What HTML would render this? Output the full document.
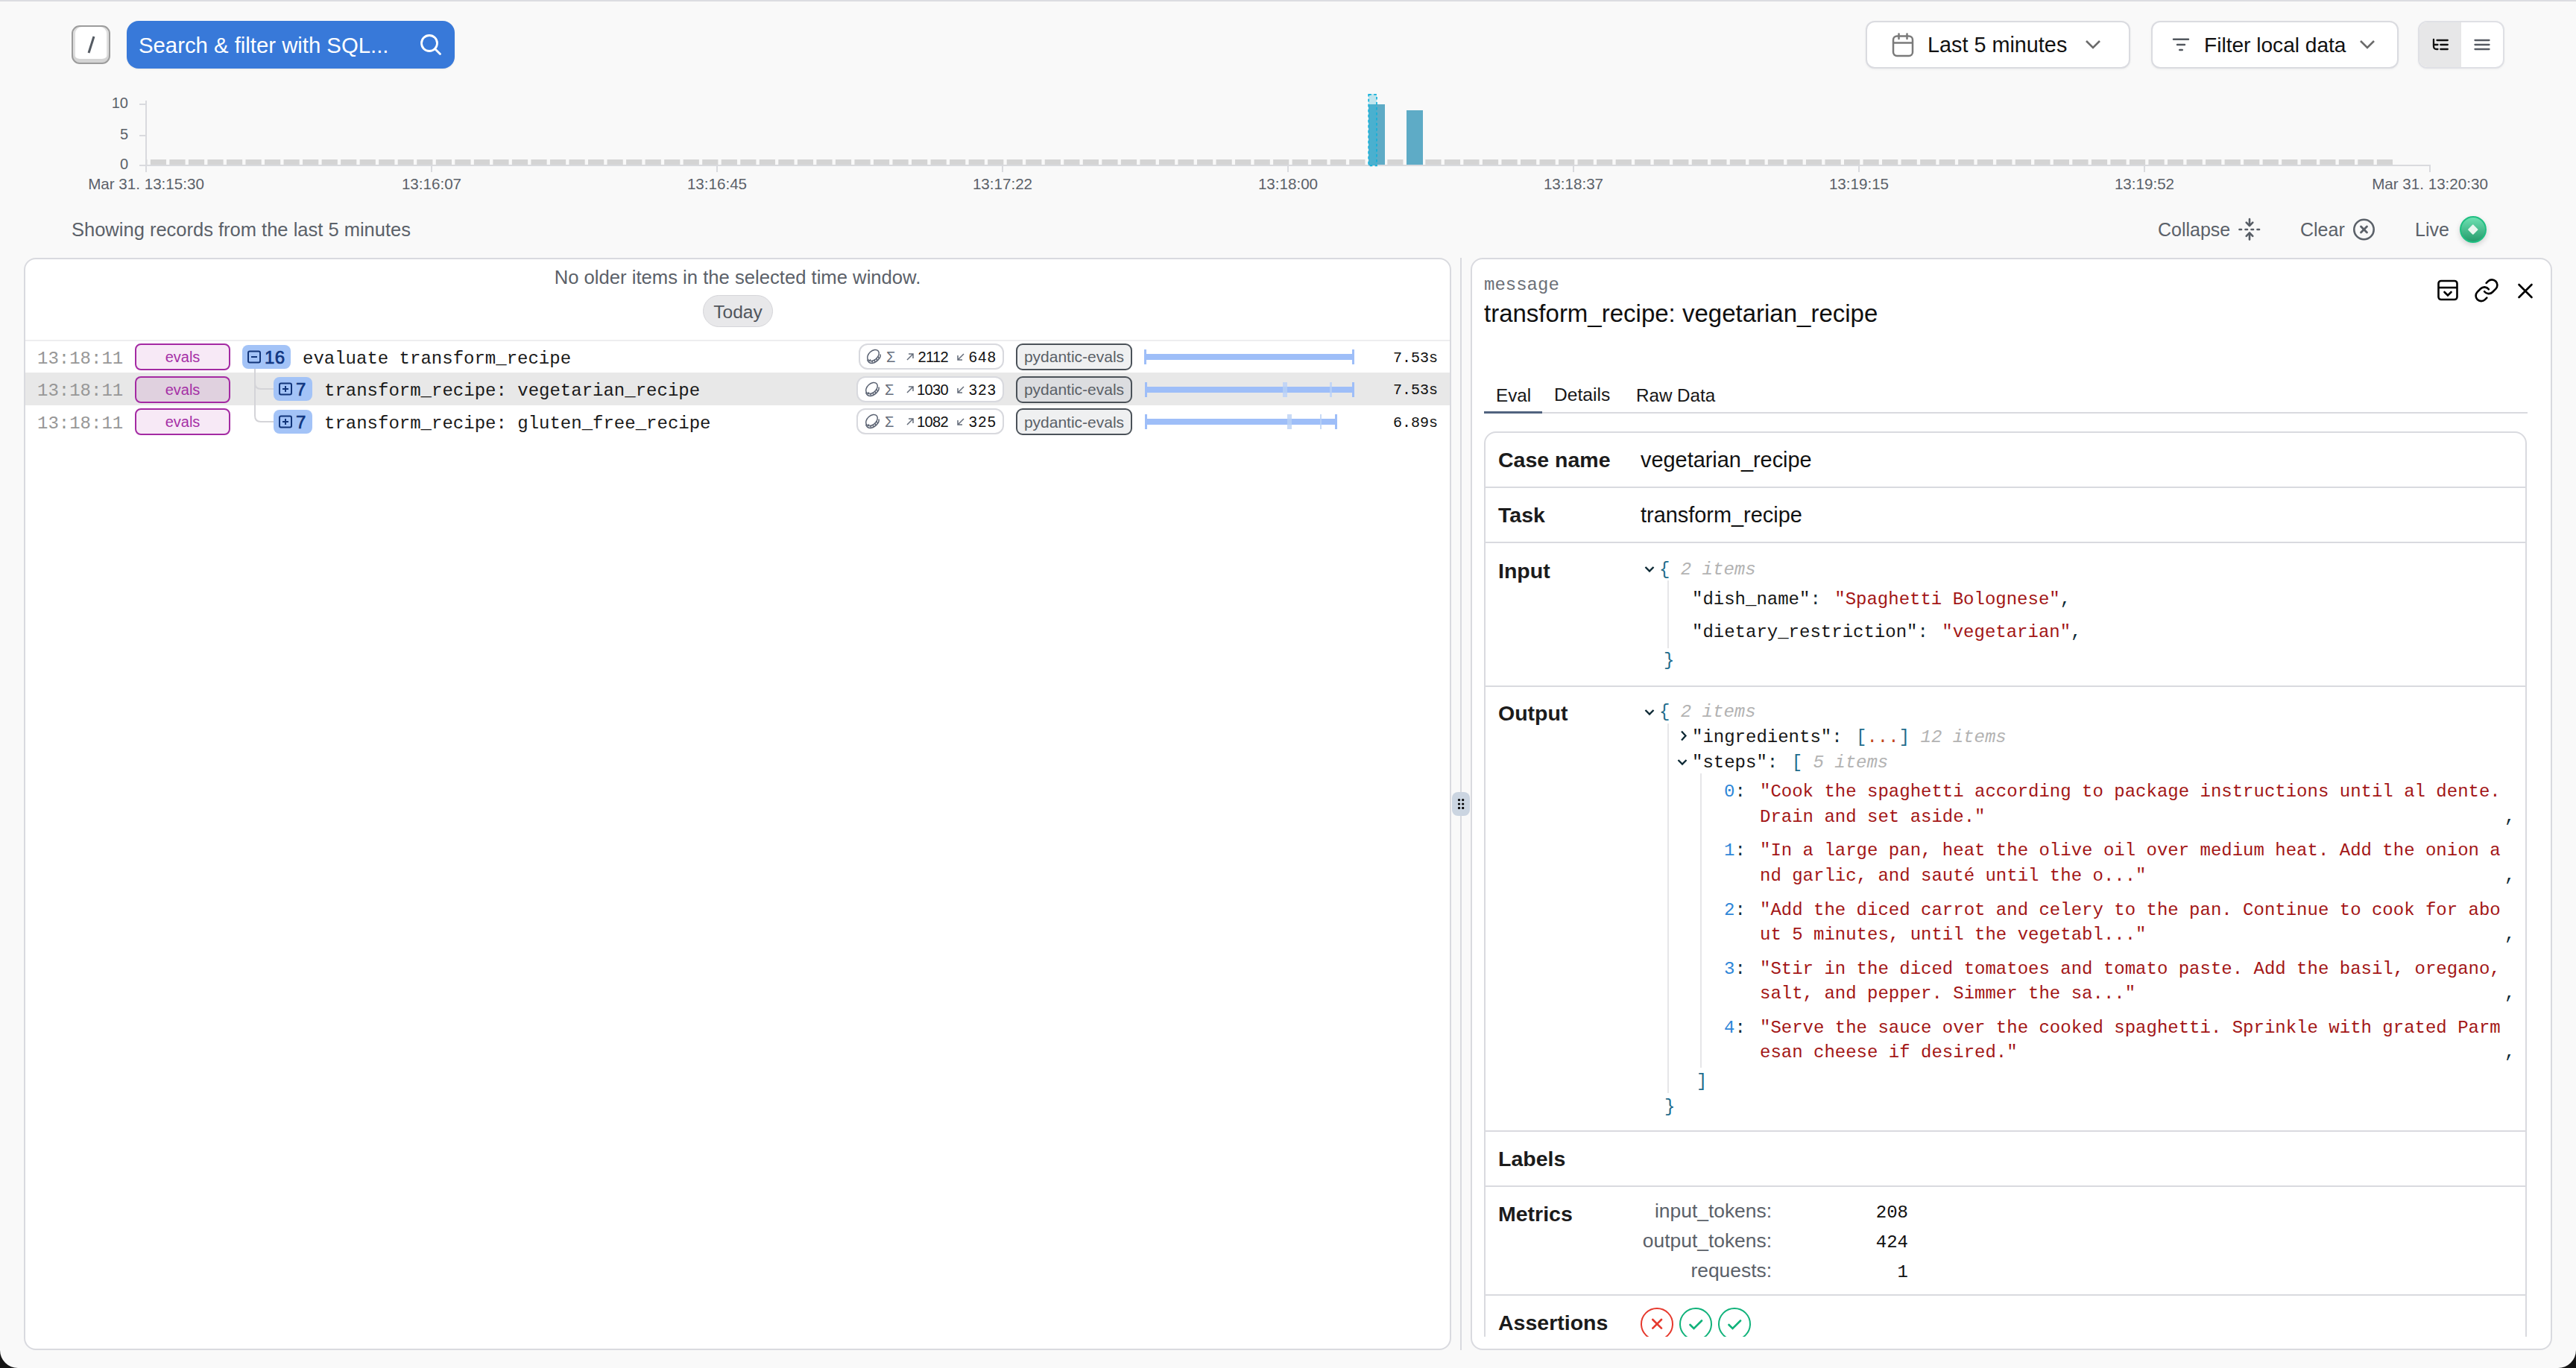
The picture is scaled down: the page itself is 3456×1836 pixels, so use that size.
<!DOCTYPE html><html><head><meta charset="utf-8"><style>
html,body{margin:0;padding:0;}
body{width:3456px;height:1836px;position:relative;overflow:hidden;background:#f9f9f9;}
.t{position:absolute;white-space:pre;}
.b{position:absolute;box-sizing:border-box;}
</style></head><body>
<div class="b" style="left:0px;top:0px;width:3456px;height:2px;background:#dcdde1;"></div>
<div class="b" style="left:96px;top:34px;width:52px;height:52px;background:#ffffff;border:2px solid #9c9c9c;border-radius:11px;box-shadow: inset 0 -5px 0 #d4d4d4, inset 3px 0 0 #dedede, inset -3px 0 0 #dedede;"></div>
<svg class="b" style="left:110px;top:44px;" width="24" height="32" viewBox="0 0 24 32" fill="none"><line x1="16" y1="5" x2="9" y2="27" stroke="#555b63" stroke-width="3"/></svg>
<div class="b" style="left:170px;top:28px;width:440px;height:64px;background:#3879d9;border-radius:16px;box-shadow:0 1px 2px rgba(0,0,0,0.08);"></div>
<div class="t" style="top:45.50px;font-family:'Liberation Sans', sans-serif;font-size:29.3px;line-height:29.3px;color:#ffffff;font-weight:400;left:186.00px;">Search &amp; filter with SQL...</div>
<svg class="b" style="left:562px;top:44px;" width="32" height="32" viewBox="0 0 32 32" fill="none"><circle cx="14" cy="14" r="10.5" stroke="#fff" stroke-width="2.8"/><line x1="21.5" y1="21.5" x2="28.5" y2="28.5" stroke="#fff" stroke-width="2.8" stroke-linecap="round"/></svg>
<div class="b" style="left:2503px;top:28px;width:355px;height:64px;background:#fff;border:2px solid #dadbe0;border-radius:12px;box-shadow:0 1px 3px rgba(0,0,0,0.06);"></div>
<svg class="b" style="left:2536px;top:42px;" width="34" height="36" viewBox="0 0 34 36" fill="none"><rect x="4" y="6.5" width="26" height="26.5" rx="5" stroke="#7a7a7a" stroke-width="2.5"/><line x1="4" y1="15.5" x2="30" y2="15.5" stroke="#7a7a7a" stroke-width="2.5"/><line x1="11.5" y1="3.5" x2="11.5" y2="10" stroke="#7a7a7a" stroke-width="2.5" stroke-linecap="round"/><line x1="22.5" y1="3.5" x2="22.5" y2="10" stroke="#7a7a7a" stroke-width="2.5" stroke-linecap="round"/></svg>
<div class="t" style="top:46.32px;font-family:'Liberation Sans', sans-serif;font-size:28.8px;line-height:28.8px;color:#111111;font-weight:400;left:2586.00px;">Last 5 minutes</div>
<svg class="b" style="left:2796px;top:50px;" width="24" height="20" viewBox="0 0 24 20" fill="none"><polyline points="3,5 12,14 21,5" stroke="#6b6b6b" stroke-width="2.6" fill="none"/></svg>
<div class="b" style="left:2886px;top:28px;width:332px;height:64px;background:#fff;border:2px solid #dadbe0;border-radius:12px;box-shadow:0 1px 3px rgba(0,0,0,0.06);"></div>
<svg class="b" style="left:2910px;top:48px;" width="32" height="24" viewBox="0 0 32 24" fill="none"><line x1="6" y1="4.8" x2="26" y2="4.8" stroke="#53585f" stroke-width="2.4" stroke-linecap="round"/><line x1="11" y1="12" x2="21" y2="12" stroke="#53585f" stroke-width="2.4" stroke-linecap="round"/><line x1="14.2" y1="19" x2="17.8" y2="19" stroke="#53585f" stroke-width="2.4" stroke-linecap="round"/></svg>
<div class="t" style="top:46.91px;font-family:'Liberation Sans', sans-serif;font-size:28.1px;line-height:28.1px;color:#111111;font-weight:400;left:2957.00px;">Filter local data</div>
<svg class="b" style="left:3164px;top:50px;" width="24" height="20" viewBox="0 0 24 20" fill="none"><polyline points="3,5 12,14 21,5" stroke="#6b6b6b" stroke-width="2.6" fill="none"/></svg>
<div class="b" style="left:3244px;top:28px;width:116px;height:64px;background:#fff;border:2px solid #dfe0e5;border-radius:12px;box-shadow:0 1px 3px rgba(0,0,0,0.05);overflow:hidden;"></div>
<div class="b" style="left:3246px;top:30px;width:56px;height:60px;background:#e7e7e8;border-radius:10px 0 0 10px;"></div>
<svg class="b" style="left:3240px;top:25px;" width="125" height="70" viewBox="0 0 125 70" fill="none"><g stroke-width="2.3" stroke-linecap="round" fill="none"><g stroke="#111"><path d="M25 28 V37 Q25 41 29 41 H30.5"/><line x1="25" y1="35" x2="30.5" y2="35"/><line x1="29.5" y1="29" x2="43.8" y2="29"/><line x1="34.3" y1="35" x2="43.8" y2="35"/><line x1="34.3" y1="41" x2="43.8" y2="41"/></g><g stroke="#555a62"><line x1="80.5" y1="29" x2="99.5" y2="29"/><line x1="80.5" y1="35" x2="99.5" y2="35"/><line x1="80.5" y1="41" x2="99.5" y2="41"/></g></g></svg>
<div class="t" style="top:128.07px;font-family:'Liberation Sans', sans-serif;font-size:20px;line-height:20px;color:#5b6169;font-weight:400;right:3284.00px;text-align:right;">10</div>
<div class="t" style="top:170.07px;font-family:'Liberation Sans', sans-serif;font-size:20px;line-height:20px;color:#5b6169;font-weight:400;right:3284.00px;text-align:right;">5</div>
<div class="t" style="top:210.07px;font-family:'Liberation Sans', sans-serif;font-size:20px;line-height:20px;color:#5b6169;font-weight:400;right:3284.00px;text-align:right;">0</div>
<div class="b" style="left:195px;top:135px;width:2px;height:96px;background:#d9dade;"></div>
<div class="b" style="left:187px;top:139px;width:9px;height:2px;background:#d9dade;"></div>
<div class="b" style="left:187px;top:181px;width:9px;height:2px;background:#d9dade;"></div>
<div class="b" style="left:187px;top:221px;width:3074px;height:2px;background:#d9dade;"></div>
<div class="b" style="left:195px;top:222px;width:2px;height:9px;background:#d9dade;"></div>
<div class="t" style="top:236.56px;font-family:'Liberation Sans', sans-serif;font-size:20.6px;line-height:20.6px;color:#5b6169;font-weight:400;left:-4.00px;width:400px;text-align:center;">Mar 31. 13:15:30</div>
<div class="b" style="left:578px;top:222px;width:2px;height:9px;background:#d9dade;"></div>
<div class="t" style="top:236.56px;font-family:'Liberation Sans', sans-serif;font-size:20.6px;line-height:20.6px;color:#5b6169;font-weight:400;left:379.00px;width:400px;text-align:center;">13:16:07</div>
<div class="b" style="left:961px;top:222px;width:2px;height:9px;background:#d9dade;"></div>
<div class="t" style="top:236.56px;font-family:'Liberation Sans', sans-serif;font-size:20.6px;line-height:20.6px;color:#5b6169;font-weight:400;left:762.00px;width:400px;text-align:center;">13:16:45</div>
<div class="b" style="left:1344px;top:222px;width:2px;height:9px;background:#d9dade;"></div>
<div class="t" style="top:236.56px;font-family:'Liberation Sans', sans-serif;font-size:20.6px;line-height:20.6px;color:#5b6169;font-weight:400;left:1145.00px;width:400px;text-align:center;">13:17:22</div>
<div class="b" style="left:1727px;top:222px;width:2px;height:9px;background:#d9dade;"></div>
<div class="t" style="top:236.56px;font-family:'Liberation Sans', sans-serif;font-size:20.6px;line-height:20.6px;color:#5b6169;font-weight:400;left:1528.00px;width:400px;text-align:center;">13:18:00</div>
<div class="b" style="left:2110px;top:222px;width:2px;height:9px;background:#d9dade;"></div>
<div class="t" style="top:236.56px;font-family:'Liberation Sans', sans-serif;font-size:20.6px;line-height:20.6px;color:#5b6169;font-weight:400;left:1911.00px;width:400px;text-align:center;">13:18:37</div>
<div class="b" style="left:2493px;top:222px;width:2px;height:9px;background:#d9dade;"></div>
<div class="t" style="top:236.56px;font-family:'Liberation Sans', sans-serif;font-size:20.6px;line-height:20.6px;color:#5b6169;font-weight:400;left:2294.00px;width:400px;text-align:center;">13:19:15</div>
<div class="b" style="left:2876px;top:222px;width:2px;height:9px;background:#d9dade;"></div>
<div class="t" style="top:236.56px;font-family:'Liberation Sans', sans-serif;font-size:20.6px;line-height:20.6px;color:#5b6169;font-weight:400;left:2677.00px;width:400px;text-align:center;">13:19:52</div>
<div class="b" style="left:3259px;top:222px;width:2px;height:9px;background:#d9dade;"></div>
<div class="t" style="top:236.56px;font-family:'Liberation Sans', sans-serif;font-size:20.6px;line-height:20.6px;color:#5b6169;font-weight:400;left:3060.00px;width:400px;text-align:center;">Mar 31. 13:20:30</div>
<svg class="b" style="left:0px;top:100px;" width="3456" height="140" viewBox="0 0 3456 140" fill="none"><rect x="197.00" y="114.0" width="0.50" height="7" fill="#d4d4d4"/><rect x="201.83" y="114.0" width="21.20" height="7" fill="#d4d4d4"/><rect x="227.36" y="114.0" width="21.20" height="7" fill="#d4d4d4"/><rect x="252.89" y="114.0" width="21.20" height="7" fill="#d4d4d4"/><rect x="278.42" y="114.0" width="21.20" height="7" fill="#d4d4d4"/><rect x="303.95" y="114.0" width="21.20" height="7" fill="#d4d4d4"/><rect x="329.48" y="114.0" width="21.20" height="7" fill="#d4d4d4"/><rect x="355.01" y="114.0" width="21.20" height="7" fill="#d4d4d4"/><rect x="380.54" y="114.0" width="21.20" height="7" fill="#d4d4d4"/><rect x="406.07" y="114.0" width="21.20" height="7" fill="#d4d4d4"/><rect x="431.60" y="114.0" width="21.20" height="7" fill="#d4d4d4"/><rect x="457.13" y="114.0" width="21.20" height="7" fill="#d4d4d4"/><rect x="482.66" y="114.0" width="21.20" height="7" fill="#d4d4d4"/><rect x="508.19" y="114.0" width="21.20" height="7" fill="#d4d4d4"/><rect x="533.72" y="114.0" width="21.20" height="7" fill="#d4d4d4"/><rect x="559.25" y="114.0" width="21.20" height="7" fill="#d4d4d4"/><rect x="584.78" y="114.0" width="21.20" height="7" fill="#d4d4d4"/><rect x="610.31" y="114.0" width="21.20" height="7" fill="#d4d4d4"/><rect x="635.84" y="114.0" width="21.20" height="7" fill="#d4d4d4"/><rect x="661.37" y="114.0" width="21.20" height="7" fill="#d4d4d4"/><rect x="686.90" y="114.0" width="21.20" height="7" fill="#d4d4d4"/><rect x="712.43" y="114.0" width="21.20" height="7" fill="#d4d4d4"/><rect x="737.96" y="114.0" width="21.20" height="7" fill="#d4d4d4"/><rect x="763.49" y="114.0" width="21.20" height="7" fill="#d4d4d4"/><rect x="789.02" y="114.0" width="21.20" height="7" fill="#d4d4d4"/><rect x="814.55" y="114.0" width="21.20" height="7" fill="#d4d4d4"/><rect x="840.08" y="114.0" width="21.20" height="7" fill="#d4d4d4"/><rect x="865.61" y="114.0" width="21.20" height="7" fill="#d4d4d4"/><rect x="891.14" y="114.0" width="21.20" height="7" fill="#d4d4d4"/><rect x="916.67" y="114.0" width="21.20" height="7" fill="#d4d4d4"/><rect x="942.20" y="114.0" width="21.20" height="7" fill="#d4d4d4"/><rect x="967.73" y="114.0" width="21.20" height="7" fill="#d4d4d4"/><rect x="993.26" y="114.0" width="21.20" height="7" fill="#d4d4d4"/><rect x="1018.79" y="114.0" width="21.20" height="7" fill="#d4d4d4"/><rect x="1044.32" y="114.0" width="21.20" height="7" fill="#d4d4d4"/><rect x="1069.85" y="114.0" width="21.20" height="7" fill="#d4d4d4"/><rect x="1095.38" y="114.0" width="21.20" height="7" fill="#d4d4d4"/><rect x="1120.91" y="114.0" width="21.20" height="7" fill="#d4d4d4"/><rect x="1146.44" y="114.0" width="21.20" height="7" fill="#d4d4d4"/><rect x="1171.97" y="114.0" width="21.20" height="7" fill="#d4d4d4"/><rect x="1197.50" y="114.0" width="21.20" height="7" fill="#d4d4d4"/><rect x="1223.03" y="114.0" width="21.20" height="7" fill="#d4d4d4"/><rect x="1248.56" y="114.0" width="21.20" height="7" fill="#d4d4d4"/><rect x="1274.09" y="114.0" width="21.20" height="7" fill="#d4d4d4"/><rect x="1299.62" y="114.0" width="21.20" height="7" fill="#d4d4d4"/><rect x="1325.15" y="114.0" width="21.20" height="7" fill="#d4d4d4"/><rect x="1350.68" y="114.0" width="21.20" height="7" fill="#d4d4d4"/><rect x="1376.21" y="114.0" width="21.20" height="7" fill="#d4d4d4"/><rect x="1401.74" y="114.0" width="21.20" height="7" fill="#d4d4d4"/><rect x="1427.27" y="114.0" width="21.20" height="7" fill="#d4d4d4"/><rect x="1452.80" y="114.0" width="21.20" height="7" fill="#d4d4d4"/><rect x="1478.33" y="114.0" width="21.20" height="7" fill="#d4d4d4"/><rect x="1503.86" y="114.0" width="21.20" height="7" fill="#d4d4d4"/><rect x="1529.39" y="114.0" width="21.20" height="7" fill="#d4d4d4"/><rect x="1554.92" y="114.0" width="21.20" height="7" fill="#d4d4d4"/><rect x="1580.45" y="114.0" width="21.20" height="7" fill="#d4d4d4"/><rect x="1605.98" y="114.0" width="21.20" height="7" fill="#d4d4d4"/><rect x="1631.51" y="114.0" width="21.20" height="7" fill="#d4d4d4"/><rect x="1657.04" y="114.0" width="21.20" height="7" fill="#d4d4d4"/><rect x="1682.57" y="114.0" width="21.20" height="7" fill="#d4d4d4"/><rect x="1708.10" y="114.0" width="21.20" height="7" fill="#d4d4d4"/><rect x="1733.63" y="114.0" width="21.20" height="7" fill="#d4d4d4"/><rect x="1759.16" y="114.0" width="21.20" height="7" fill="#d4d4d4"/><rect x="1784.69" y="114.0" width="21.20" height="7" fill="#d4d4d4"/><rect x="1810.22" y="114.0" width="21.20" height="7" fill="#d4d4d4"/><rect x="1861.28" y="114.0" width="21.20" height="7" fill="#d4d4d4"/><rect x="1912.34" y="114.0" width="21.20" height="7" fill="#d4d4d4"/><rect x="1937.87" y="114.0" width="21.20" height="7" fill="#d4d4d4"/><rect x="1963.40" y="114.0" width="21.20" height="7" fill="#d4d4d4"/><rect x="1988.93" y="114.0" width="21.20" height="7" fill="#d4d4d4"/><rect x="2014.46" y="114.0" width="21.20" height="7" fill="#d4d4d4"/><rect x="2039.99" y="114.0" width="21.20" height="7" fill="#d4d4d4"/><rect x="2065.52" y="114.0" width="21.20" height="7" fill="#d4d4d4"/><rect x="2091.05" y="114.0" width="21.20" height="7" fill="#d4d4d4"/><rect x="2116.58" y="114.0" width="21.20" height="7" fill="#d4d4d4"/><rect x="2142.11" y="114.0" width="21.20" height="7" fill="#d4d4d4"/><rect x="2167.64" y="114.0" width="21.20" height="7" fill="#d4d4d4"/><rect x="2193.17" y="114.0" width="21.20" height="7" fill="#d4d4d4"/><rect x="2218.70" y="114.0" width="21.20" height="7" fill="#d4d4d4"/><rect x="2244.23" y="114.0" width="21.20" height="7" fill="#d4d4d4"/><rect x="2269.76" y="114.0" width="21.20" height="7" fill="#d4d4d4"/><rect x="2295.29" y="114.0" width="21.20" height="7" fill="#d4d4d4"/><rect x="2320.82" y="114.0" width="21.20" height="7" fill="#d4d4d4"/><rect x="2346.35" y="114.0" width="21.20" height="7" fill="#d4d4d4"/><rect x="2371.88" y="114.0" width="21.20" height="7" fill="#d4d4d4"/><rect x="2397.41" y="114.0" width="21.20" height="7" fill="#d4d4d4"/><rect x="2422.94" y="114.0" width="21.20" height="7" fill="#d4d4d4"/><rect x="2448.47" y="114.0" width="21.20" height="7" fill="#d4d4d4"/><rect x="2474.00" y="114.0" width="21.20" height="7" fill="#d4d4d4"/><rect x="2499.53" y="114.0" width="21.20" height="7" fill="#d4d4d4"/><rect x="2525.06" y="114.0" width="21.20" height="7" fill="#d4d4d4"/><rect x="2550.59" y="114.0" width="21.20" height="7" fill="#d4d4d4"/><rect x="2576.12" y="114.0" width="21.20" height="7" fill="#d4d4d4"/><rect x="2601.65" y="114.0" width="21.20" height="7" fill="#d4d4d4"/><rect x="2627.18" y="114.0" width="21.20" height="7" fill="#d4d4d4"/><rect x="2652.71" y="114.0" width="21.20" height="7" fill="#d4d4d4"/><rect x="2678.24" y="114.0" width="21.20" height="7" fill="#d4d4d4"/><rect x="2703.77" y="114.0" width="21.20" height="7" fill="#d4d4d4"/><rect x="2729.30" y="114.0" width="21.20" height="7" fill="#d4d4d4"/><rect x="2754.83" y="114.0" width="21.20" height="7" fill="#d4d4d4"/><rect x="2780.36" y="114.0" width="21.20" height="7" fill="#d4d4d4"/><rect x="2805.89" y="114.0" width="21.20" height="7" fill="#d4d4d4"/><rect x="2831.42" y="114.0" width="21.20" height="7" fill="#d4d4d4"/><rect x="2856.95" y="114.0" width="21.20" height="7" fill="#d4d4d4"/><rect x="2882.48" y="114.0" width="21.20" height="7" fill="#d4d4d4"/><rect x="2908.01" y="114.0" width="21.20" height="7" fill="#d4d4d4"/><rect x="2933.54" y="114.0" width="21.20" height="7" fill="#d4d4d4"/><rect x="2959.07" y="114.0" width="21.20" height="7" fill="#d4d4d4"/><rect x="2984.60" y="114.0" width="21.20" height="7" fill="#d4d4d4"/><rect x="3010.13" y="114.0" width="21.20" height="7" fill="#d4d4d4"/><rect x="3035.66" y="114.0" width="21.20" height="7" fill="#d4d4d4"/><rect x="3061.19" y="114.0" width="21.20" height="7" fill="#d4d4d4"/><rect x="3086.72" y="114.0" width="21.20" height="7" fill="#d4d4d4"/><rect x="3112.25" y="114.0" width="21.20" height="7" fill="#d4d4d4"/><rect x="3137.78" y="114.0" width="21.20" height="7" fill="#d4d4d4"/><rect x="3163.31" y="114.0" width="21.20" height="7" fill="#d4d4d4"/><rect x="3188.84" y="114.0" width="21.20" height="7" fill="#d4d4d4"/></svg>
<div class="b" style="left:1836px;top:140px;width:22px;height:81px;background:#5eabc6;"></div>
<div class="b" style="left:1887px;top:148px;width:22px;height:73px;background:#5eabc6;"></div>
<div class="b" style="left:1836px;top:140px;width:11px;height:82px;background:#4ab0cf;"></div>
<div class="b" style="left:1836px;top:126px;width:11px;height:14px;background:#c0e5ee;"></div>
<svg class="b" style="left:1830px;top:120px;" width="24" height="110" viewBox="0 0 24 110" fill="none"><rect x="6.2" y="6.8" width="10.8" height="95.5" stroke="#12b0d9" stroke-width="1.7" stroke-dasharray="3.6 3.4" fill="none"/></svg>
<div class="t" style="top:296.41px;font-family:'Liberation Sans', sans-serif;font-size:25.5px;line-height:25.5px;color:#5b6169;font-weight:400;left:96.00px;">Showing records from the last 5 minutes</div>
<div class="t" style="top:296.34px;font-family:'Liberation Sans', sans-serif;font-size:25px;line-height:25px;color:#5b6169;font-weight:400;left:2895.00px;">Collapse</div>
<svg class="b" style="left:3000px;top:290px;" width="36" height="36" viewBox="0 0 36 36" fill="none"><g stroke="#575d65" stroke-width="2.6" stroke-linecap="round" stroke-linejoin="round" fill="none"><line x1="18" y1="4" x2="18" y2="12.5"/><polyline points="13.7,8.7 18,13 22.3,8.7"/><line x1="18" y1="31.5" x2="18" y2="23"/><polyline points="13.7,26.8 18,22.5 22.3,26.8"/><line x1="4.5" y1="18" x2="7" y2="18"/><line x1="12.5" y1="18" x2="15" y2="18"/><line x1="20.5" y1="18" x2="23" y2="18"/><line x1="28.5" y1="18" x2="31" y2="18"/></g></svg>
<div class="t" style="top:296.34px;font-family:'Liberation Sans', sans-serif;font-size:25px;line-height:25px;color:#5b6169;font-weight:400;left:3086.00px;">Clear</div>
<svg class="b" style="left:3154px;top:290px;" width="36" height="36" viewBox="0 0 36 36" fill="none"><circle cx="17.5" cy="18" r="13.2" stroke="#5b6169" stroke-width="2.6"/><line x1="13.5" y1="14" x2="21.5" y2="22" stroke="#5b6169" stroke-width="2.8" stroke-linecap="round"/><line x1="21.5" y1="14" x2="13.5" y2="22" stroke="#5b6169" stroke-width="2.8" stroke-linecap="round"/></svg>
<div class="t" style="top:296.34px;font-family:'Liberation Sans', sans-serif;font-size:25px;line-height:25px;color:#5b6169;font-weight:400;left:3240.00px;">Live</div>
<div class="b" style="left:3300px;top:290px;width:36px;height:36px;background:linear-gradient(180deg,#6ee0b2 0%,#259c6c 100%);border:2px solid #20bf82;border-radius:18px;box-shadow:0 3px 7px rgba(0,0,0,0.16);"></div>
<div class="b" style="left:3313.4px;top:303.2px;width:9.599999999999909px;height:9.600000000000023px;background:#eaf6ef;border-radius:1px;transform:rotate(45deg);"></div>
<div class="b" style="left:32px;top:346px;width:1915px;height:1466px;background:#ffffff;border:2px solid #d9dadf;border-radius:16px;"></div>
<div class="t" style="top:360.29px;font-family:'Liberation Sans', sans-serif;font-size:25.65px;line-height:25.65px;color:#5b6169;font-weight:400;left:589.50px;width:800px;text-align:center;">No older items in the selected time window.</div>
<div class="b" style="left:943px;top:396px;width:94px;height:43px;background:#e8e8ea;border:1.5px solid #d5d5d9;border-radius:22px;"></div>
<div class="t" style="top:406.76px;font-family:'Liberation Sans', sans-serif;font-size:24.5px;line-height:24.5px;color:#50555c;font-weight:400;left:890.00px;width:200px;text-align:center;">Today</div>
<div class="b" style="left:34px;top:456px;width:1911px;height:2px;background:#ededef;"></div>
<div class="b" style="left:34px;top:500px;width:1911px;height:44px;background:#e8e8e8;"></div>
<svg class="b" style="left:330px;top:490px;" width="50" height="90" viewBox="0 0 50 90" fill="none"><path d="M12 5 V24 Q12 32 20 32 H37" stroke="#d4d4d8" stroke-width="2" fill="none"/><path d="M12 20 V68 Q12 76 20 76 H37" stroke="#d4d4d8" stroke-width="2" fill="none"/></svg>
<div class="t" style="top:469.61px;font-family:'Liberation Mono', monospace;font-size:24px;line-height:24px;color:#979797;font-weight:400;left:50.00px;">13:18:11</div>
<div class="b" style="left:181px;top:461.0px;width:128px;height:36.0px;background:#f7e9f6;border:2.5px solid #a42aa3;border-radius:8px;"></div>
<div class="t" style="top:469.07px;font-family:'Liberation Sans', sans-serif;font-size:20px;line-height:20px;color:#a52fa6;font-weight:400;left:185.00px;width:120px;text-align:center;">evals</div>
<div class="b" style="left:325px;top:463px;width:65px;height:32px;background:#a3c3f7;border-radius:8px;"></div>
<svg class="b" style="left:330px;top:469px;" width="22" height="20" viewBox="0 0 22 20" fill="none"><rect x="3" y="2.5" width="16" height="15" rx="2" stroke="#12357a" stroke-width="2"/><line x1="7" y1="10" x2="15" y2="10" stroke="#12357a" stroke-width="2"/></svg>
<div class="t" style="top:467.98px;font-family:'Liberation Sans', sans-serif;font-size:24px;line-height:24px;color:#0f3580;font-weight:400;letter-spacing:0.3px;left:355.00px;-webkit-text-stroke:0.7px #0f3580;">16</div>
<div class="t" style="top:469.61px;font-family:'Liberation Mono', monospace;font-size:24px;line-height:24px;color:#1a1a1a;font-weight:400;left:406.00px;">evaluate transform_recipe</div>
<div class="b" style="left:1152px;top:461.0px;width:195px;height:35.0px;background:#ffffff;border:2px solid #d8d9de;border-radius:12px;"></div>
<svg class="b" style="left:1161px;top:468.0px;" width="22" height="22" viewBox="0 0 22 22" fill="none"><g stroke="#5a6272" stroke-width="1.5" fill="none"><ellipse cx="10.5" cy="9" rx="9" ry="6" transform="rotate(-42 10.5 9)"/><path d="M2.6 14.5 Q4 19.5 9 19.5 Q15 18.5 19.5 12 Q20.5 9.5 20 7.5"/><path d="M5.5 17 L6.8 14.2 M9 18.7 L9.6 15.8 M12.5 17.6 L12.3 14.6 M15.5 15.5 L14.9 12.6 M18 12.8 L17 10.2"/></g></svg>
<div class="t" style="top:469.07px;font-family:'Liberation Sans', sans-serif;font-size:20px;line-height:20px;color:#646c7a;font-weight:400;left:1189.00px;">Σ</div>
<svg class="b" style="left:1214px;top:472.0px;" width="14" height="14" viewBox="0 0 14 14" fill="none"><path d="M3 11 L11 3 M5 3 H11 V9" stroke="#646c7a" stroke-width="1.5" fill="none"/></svg>
<div class="t" style="top:468.87px;font-family:'Liberation Sans', sans-serif;font-size:20px;line-height:20px;color:#111111;font-weight:400;letter-spacing:-0.6px;right:2184.00px;text-align:right;">2112</div>
<svg class="b" style="left:1282px;top:472.0px;" width="14" height="14" viewBox="0 0 14 14" fill="none"><path d="M11 3 L3 11 M3 5 V11 H9" stroke="#646c7a" stroke-width="1.5" fill="none"/></svg>
<div class="t" style="top:468.87px;font-family:'Liberation Sans', sans-serif;font-size:20px;line-height:20px;color:#111111;font-weight:400;letter-spacing:1.5px;right:2118.50px;text-align:right;">648</div>
<div class="b" style="left:1363px;top:461.0px;width:156px;height:36.0px;background:#eff0f1;border:2.5px solid #4b5259;border-radius:9px;"></div>
<div class="t" style="top:468.22px;font-family:'Liberation Sans', sans-serif;font-size:21px;line-height:21px;color:#5a6067;font-weight:400;left:1341.00px;width:200px;text-align:center;">pydantic-evals</div>
<div class="b" style="left:1535px;top:475.0px;width:282px;height:8.0px;background:#9ebef8;"></div>
<div class="b" style="left:1535px;top:469.0px;width:3px;height:20.0px;background:#9ebef8;"></div>
<div class="b" style="left:1814px;top:469.0px;width:3px;height:20.0px;background:#9ebef8;"></div>
<div class="t" style="top:470.68px;font-family:'Liberation Mono', monospace;font-size:20px;line-height:20px;color:#111111;font-weight:400;right:1527.00px;text-align:right;">7.53s</div>
<div class="t" style="top:513.31px;font-family:'Liberation Mono', monospace;font-size:24px;line-height:24px;color:#979797;font-weight:400;left:50.00px;">13:18:11</div>
<div class="b" style="left:181px;top:504.7px;width:128px;height:36.00000000000006px;background:#e0d1df;border:2.5px solid #a42aa3;border-radius:8px;"></div>
<div class="t" style="top:512.77px;font-family:'Liberation Sans', sans-serif;font-size:20px;line-height:20px;color:#a52fa6;font-weight:400;left:185.00px;width:120px;text-align:center;">evals</div>
<div class="b" style="left:367px;top:506.00000000000006px;width:52px;height:31.999999999999943px;background:#a3c3f7;border-radius:8px;"></div>
<svg class="b" style="left:372px;top:512.0px;" width="22" height="20" viewBox="0 0 22 20" fill="none"><rect x="3" y="2.5" width="16" height="15" rx="2" stroke="#12357a" stroke-width="2"/><line x1="7" y1="10" x2="15" y2="10" stroke="#12357a" stroke-width="2"/><line x1="11" y1="6" x2="11" y2="14" stroke="#12357a" stroke-width="2"/></svg>
<div class="t" style="top:511.18px;font-family:'Liberation Sans', sans-serif;font-size:24px;line-height:24px;color:#0f3580;font-weight:400;left:397.00px;-webkit-text-stroke:0.7px #0f3580;">7</div>
<div class="t" style="top:513.31px;font-family:'Liberation Mono', monospace;font-size:24px;line-height:24px;color:#1a1a1a;font-weight:400;left:435.00px;">transform_recipe: vegetarian_recipe</div>
<div class="b" style="left:1149px;top:504.7px;width:198px;height:35.00000000000006px;background:#ffffff;border:2px solid #d8d9de;border-radius:12px;"></div>
<svg class="b" style="left:1159px;top:511.7px;" width="22" height="22" viewBox="0 0 22 22" fill="none"><g stroke="#5a6272" stroke-width="1.5" fill="none"><ellipse cx="10.5" cy="9" rx="9" ry="6" transform="rotate(-42 10.5 9)"/><path d="M2.6 14.5 Q4 19.5 9 19.5 Q15 18.5 19.5 12 Q20.5 9.5 20 7.5"/><path d="M5.5 17 L6.8 14.2 M9 18.7 L9.6 15.8 M12.5 17.6 L12.3 14.6 M15.5 15.5 L14.9 12.6 M18 12.8 L17 10.2"/></g></svg>
<div class="t" style="top:512.77px;font-family:'Liberation Sans', sans-serif;font-size:20px;line-height:20px;color:#646c7a;font-weight:400;left:1187.00px;">Σ</div>
<svg class="b" style="left:1214px;top:515.7px;" width="14" height="14" viewBox="0 0 14 14" fill="none"><path d="M3 11 L11 3 M5 3 H11 V9" stroke="#646c7a" stroke-width="1.5" fill="none"/></svg>
<div class="t" style="top:512.57px;font-family:'Liberation Sans', sans-serif;font-size:20px;line-height:20px;color:#111111;font-weight:400;letter-spacing:-0.6px;right:2184.00px;text-align:right;">1030</div>
<svg class="b" style="left:1282px;top:515.7px;" width="14" height="14" viewBox="0 0 14 14" fill="none"><path d="M11 3 L3 11 M3 5 V11 H9" stroke="#646c7a" stroke-width="1.5" fill="none"/></svg>
<div class="t" style="top:512.57px;font-family:'Liberation Sans', sans-serif;font-size:20px;line-height:20px;color:#111111;font-weight:400;letter-spacing:1.5px;right:2118.50px;text-align:right;">323</div>
<div class="b" style="left:1363px;top:504.7px;width:156px;height:36.00000000000006px;background:#dcdde0;border:2.5px solid #4b5259;border-radius:9px;"></div>
<div class="t" style="top:511.92px;font-family:'Liberation Sans', sans-serif;font-size:21px;line-height:21px;color:#5a6067;font-weight:400;left:1341.00px;width:200px;text-align:center;">pydantic-evals</div>
<div class="b" style="left:1536px;top:518.7px;width:281px;height:8.0px;background:#9ebef8;"></div>
<div class="b" style="left:1536px;top:512.7px;width:3px;height:20.0px;background:#9ebef8;"></div>
<div class="b" style="left:1814px;top:512.7px;width:3px;height:20.0px;background:#9ebef8;"></div>
<div class="b" style="left:1721px;top:512.7px;width:6px;height:20.0px;background:#c3d6f6;"></div>
<div class="b" style="left:1721px;top:518.7px;width:6px;height:8.0px;background:#b3cdf6;"></div>
<div class="b" style="left:1784px;top:512.7px;width:3px;height:20.0px;background:#c3d6f6;"></div>
<div class="b" style="left:1784px;top:518.7px;width:3px;height:8.0px;background:#b3cdf6;"></div>
<div class="t" style="top:514.38px;font-family:'Liberation Mono', monospace;font-size:20px;line-height:20px;color:#111111;font-weight:400;right:1527.00px;text-align:right;">7.53s</div>
<div class="t" style="top:557.01px;font-family:'Liberation Mono', monospace;font-size:24px;line-height:24px;color:#979797;font-weight:400;left:50.00px;">13:18:11</div>
<div class="b" style="left:181px;top:548.4px;width:128px;height:36.0px;background:#f7e9f6;border:2.5px solid #a42aa3;border-radius:8px;"></div>
<div class="t" style="top:556.47px;font-family:'Liberation Sans', sans-serif;font-size:20px;line-height:20px;color:#a52fa6;font-weight:400;left:185.00px;width:120px;text-align:center;">evals</div>
<div class="b" style="left:367px;top:549.6999999999999px;width:52px;height:32.0px;background:#a3c3f7;border-radius:8px;"></div>
<svg class="b" style="left:372px;top:555.6999999999999px;" width="22" height="20" viewBox="0 0 22 20" fill="none"><rect x="3" y="2.5" width="16" height="15" rx="2" stroke="#12357a" stroke-width="2"/><line x1="7" y1="10" x2="15" y2="10" stroke="#12357a" stroke-width="2"/><line x1="11" y1="6" x2="11" y2="14" stroke="#12357a" stroke-width="2"/></svg>
<div class="t" style="top:554.88px;font-family:'Liberation Sans', sans-serif;font-size:24px;line-height:24px;color:#0f3580;font-weight:400;left:397.00px;-webkit-text-stroke:0.7px #0f3580;">7</div>
<div class="t" style="top:557.01px;font-family:'Liberation Mono', monospace;font-size:24px;line-height:24px;color:#1a1a1a;font-weight:400;left:435.00px;">transform_recipe: gluten_free_recipe</div>
<div class="b" style="left:1149px;top:548.4px;width:198px;height:35.0px;background:#ffffff;border:2px solid #d8d9de;border-radius:12px;"></div>
<svg class="b" style="left:1159px;top:555.4px;" width="22" height="22" viewBox="0 0 22 22" fill="none"><g stroke="#5a6272" stroke-width="1.5" fill="none"><ellipse cx="10.5" cy="9" rx="9" ry="6" transform="rotate(-42 10.5 9)"/><path d="M2.6 14.5 Q4 19.5 9 19.5 Q15 18.5 19.5 12 Q20.5 9.5 20 7.5"/><path d="M5.5 17 L6.8 14.2 M9 18.7 L9.6 15.8 M12.5 17.6 L12.3 14.6 M15.5 15.5 L14.9 12.6 M18 12.8 L17 10.2"/></g></svg>
<div class="t" style="top:556.47px;font-family:'Liberation Sans', sans-serif;font-size:20px;line-height:20px;color:#646c7a;font-weight:400;left:1187.00px;">Σ</div>
<svg class="b" style="left:1214px;top:559.4px;" width="14" height="14" viewBox="0 0 14 14" fill="none"><path d="M3 11 L11 3 M5 3 H11 V9" stroke="#646c7a" stroke-width="1.5" fill="none"/></svg>
<div class="t" style="top:556.27px;font-family:'Liberation Sans', sans-serif;font-size:20px;line-height:20px;color:#111111;font-weight:400;letter-spacing:-0.6px;right:2184.00px;text-align:right;">1082</div>
<svg class="b" style="left:1282px;top:559.4px;" width="14" height="14" viewBox="0 0 14 14" fill="none"><path d="M11 3 L3 11 M3 5 V11 H9" stroke="#646c7a" stroke-width="1.5" fill="none"/></svg>
<div class="t" style="top:556.27px;font-family:'Liberation Sans', sans-serif;font-size:20px;line-height:20px;color:#111111;font-weight:400;letter-spacing:1.5px;right:2118.50px;text-align:right;">325</div>
<div class="b" style="left:1363px;top:548.4px;width:156px;height:36.0px;background:#eff0f1;border:2.5px solid #4b5259;border-radius:9px;"></div>
<div class="t" style="top:555.62px;font-family:'Liberation Sans', sans-serif;font-size:21px;line-height:21px;color:#5a6067;font-weight:400;left:1341.00px;width:200px;text-align:center;">pydantic-evals</div>
<div class="b" style="left:1536px;top:562.4px;width:258px;height:8.0px;background:#9ebef8;"></div>
<div class="b" style="left:1536px;top:556.4px;width:3px;height:20.0px;background:#9ebef8;"></div>
<div class="b" style="left:1791px;top:556.4px;width:3px;height:20.0px;background:#9ebef8;"></div>
<div class="b" style="left:1727px;top:556.4px;width:6px;height:20.0px;background:#c8daf7;"></div>
<div class="b" style="left:1727px;top:562.4px;width:6px;height:8.0px;background:#b3cdf6;"></div>
<div class="b" style="left:1771px;top:556.4px;width:2px;height:20.0px;background:#c8daf7;"></div>
<div class="b" style="left:1771px;top:562.4px;width:2px;height:8.0px;background:#b3cdf6;"></div>
<div class="t" style="top:558.08px;font-family:'Liberation Mono', monospace;font-size:20px;line-height:20px;color:#111111;font-weight:400;right:1527.00px;text-align:right;">6.89s</div>
<div class="b" style="left:1959px;top:346px;width:2px;height:1466px;background:#d9dadf;"></div>
<div class="b" style="left:1948px;top:1063px;width:24px;height:32px;background:#cbd5e1;border-radius:8px;"></div>
<svg class="b" style="left:1948px;top:1063px;" width="24" height="32" viewBox="0 0 24 32" fill="none"><circle cx="9.5" cy="10.6" r="1.6" fill="#000"/><circle cx="9.5" cy="16" r="1.6" fill="#000"/><circle cx="9.5" cy="21.4" r="1.6" fill="#000"/><circle cx="14.7" cy="10.6" r="1.6" fill="#000"/><circle cx="14.7" cy="16" r="1.6" fill="#000"/><circle cx="14.7" cy="21.4" r="1.6" fill="#000"/></svg>
<div class="b" style="left:1973px;top:346px;width:1451px;height:1466px;background:#ffffff;border:2px solid #d9dadf;border-radius:16px;"></div>
<div class="t" style="top:370.61px;font-family:'Liberation Mono', monospace;font-size:24px;line-height:24px;color:#6b7078;font-weight:400;left:1991.00px;">message</div>
<div class="t" style="top:404.07px;font-family:'Liberation Sans', sans-serif;font-size:33.0px;line-height:33.0px;color:#0f0f0f;font-weight:400;left:1991.00px;">transform_recipe: vegetarian_recipe</div>
<svg class="b" style="left:3268px;top:373px;" width="32" height="32" viewBox="0 0 32 32" fill="none"><rect x="3.5" y="4" width="25" height="25" rx="3.5" stroke="#000" stroke-width="2.6"/><line x1="3.5" y1="13" x2="28.5" y2="13" stroke="#000" stroke-width="2.6"/><polyline points="11.5,19 16,23.5 20.5,19" stroke="#000" stroke-width="2.6" fill="none" stroke-linecap="round"/></svg>
<svg class="b" style="left:3318px;top:372px;" width="36" height="36" viewBox="0 0 36 36" fill="none"><g transform="translate(0.6,0.35) scale(1.45)"><path d="M10 13a5 5 0 0 0 7.54.54l3-3a5 5 0 0 0-7.07-7.07l-1.72 1.71" stroke="#000" stroke-width="1.8" fill="none" stroke-linecap="round" stroke-linejoin="round"/><path d="M14 11a5 5 0 0 0-7.54-.54l-3 3a5 5 0 0 0 7.07 7.07l1.71-1.71" stroke="#000" stroke-width="1.8" fill="none" stroke-linecap="round" stroke-linejoin="round"/></g></svg>
<svg class="b" style="left:3374px;top:376px;" width="28" height="28" viewBox="0 0 28 28" fill="none"><line x1="5.5" y1="6" x2="22.5" y2="23" stroke="#000" stroke-width="2.6" stroke-linecap="round"/><line x1="22.5" y1="6" x2="5.5" y2="23" stroke="#000" stroke-width="2.6" stroke-linecap="round"/></svg>
<div class="t" style="top:518.51px;font-family:'Liberation Sans', sans-serif;font-size:24.2px;line-height:24.2px;color:#161616;font-weight:400;left:2007.00px;">Eval</div>
<div class="t" style="top:518.18px;font-family:'Liberation Sans', sans-serif;font-size:24.6px;line-height:24.6px;color:#161616;font-weight:400;left:2085.00px;">Details</div>
<div class="t" style="top:518.51px;font-family:'Liberation Sans', sans-serif;font-size:24.2px;line-height:24.2px;color:#161616;font-weight:400;left:2195.00px;">Raw Data</div>
<div class="b" style="left:1991px;top:553px;width:1400px;height:2px;background:#d9dadf;"></div>
<div class="b" style="left:1991px;top:552px;width:78px;height:2.5px;background:#50627f;"></div>
<div class="b" style="left:1991px;top:579px;width:1399px;height:1215px;overflow:hidden;">
<div class="b" style="left:0;top:0;width:1399px;height:1300px;border:2px solid #d9dadf;border-radius:16px;background:#fff;"></div>
<div class="b" style="left:2px;top:74px;width:1396px;height:2px;background:#d9dadf;"></div>
<div class="b" style="left:2px;top:148px;width:1396px;height:2px;background:#d9dadf;"></div>
<div class="b" style="left:2px;top:341px;width:1396px;height:2px;background:#d9dadf;"></div>
<div class="b" style="left:2px;top:938px;width:1396px;height:2px;background:#d9dadf;"></div>
<div class="b" style="left:2px;top:1012px;width:1396px;height:2px;background:#d9dadf;"></div>
<div class="b" style="left:2px;top:1158px;width:1396px;height:2px;background:#d9dadf;"></div>
<div class="t" style="top:23.87px;font-family:'Liberation Sans', sans-serif;font-size:28.5px;line-height:28.5px;color:#1b1b1b;font-weight:700;left:19.00px;">Case name</div>
<div class="t" style="top:23.54px;font-family:'Liberation Sans', sans-serif;font-size:28.9px;line-height:28.9px;color:#111;font-weight:400;left:210.00px;">vegetarian_recipe</div>
<div class="t" style="top:97.87px;font-family:'Liberation Sans', sans-serif;font-size:28.5px;line-height:28.5px;color:#1b1b1b;font-weight:700;left:19.00px;">Task</div>
<div class="t" style="top:97.54px;font-family:'Liberation Sans', sans-serif;font-size:28.9px;line-height:28.9px;color:#111;font-weight:400;left:210.00px;">transform_recipe</div>
<div class="t" style="top:172.87px;font-family:'Liberation Sans', sans-serif;font-size:28.5px;line-height:28.5px;color:#1b1b1b;font-weight:700;left:19.00px;">Input</div>
<div class="t" style="top:363.87px;font-family:'Liberation Sans', sans-serif;font-size:28.5px;line-height:28.5px;color:#1b1b1b;font-weight:700;left:19.00px;">Output</div>
<div class="t" style="top:961.87px;font-family:'Liberation Sans', sans-serif;font-size:28.5px;line-height:28.5px;color:#1b1b1b;font-weight:700;left:19.00px;">Labels</div>
<div class="t" style="top:1035.87px;font-family:'Liberation Sans', sans-serif;font-size:28.5px;line-height:28.5px;color:#1b1b1b;font-weight:700;left:19.00px;">Metrics</div>
<div class="t" style="top:1181.87px;font-family:'Liberation Sans', sans-serif;font-size:28.5px;line-height:28.5px;color:#1b1b1b;font-weight:700;left:19.00px;">Assertions</div>
<svg class="b" style="left:214px;top:178px;" width="16" height="14" viewBox="0 0 16 14" fill="none"><polyline points="2.5,4 8,9.5 13.5,4" stroke="#0b2733" stroke-width="2.3" fill="none"/></svg>
<div class="t" style="top:173.61px;font-family:'Liberation Mono', monospace;font-size:24px;line-height:24px;color:#161616;font-weight:400;left:235.00px;"><span style="color:#1f6c8c;">{</span> <span style="color:#b3b3b3;font-style:italic;">2 items</span></div>
<div class="b" style="left:246px;top:200px;width:2px;height:91px;background:#e6e6e8;"></div>
<div class="t" style="top:213.61px;font-family:'Liberation Mono', monospace;font-size:24px;line-height:24px;color:#161616;font-weight:400;left:279.00px;"><span style="color:#161616;">&quot;dish_name&quot;</span><span style="color:#0e2a36;padding-right:4px">: </span><span style="color:#a31616;">&quot;Spaghetti Bolognese&quot;</span><span style="color:#0e2a36;">,</span></div>
<div class="t" style="top:257.61px;font-family:'Liberation Mono', monospace;font-size:24px;line-height:24px;color:#161616;font-weight:400;left:279.00px;"><span style="color:#161616;">&quot;dietary_restriction&quot;</span><span style="color:#0e2a36;padding-right:4px">: </span><span style="color:#a31616;">&quot;vegetarian&quot;</span><span style="color:#0e2a36;">,</span></div>
<div class="t" style="top:295.61px;font-family:'Liberation Mono', monospace;font-size:24px;line-height:24px;color:#161616;font-weight:400;left:241.00px;"><span style="color:#1f6c8c;">}</span></div>
<svg class="b" style="left:214px;top:370px;" width="16" height="14" viewBox="0 0 16 14" fill="none"><polyline points="2.5,4 8,9.5 13.5,4" stroke="#0b2733" stroke-width="2.3" fill="none"/></svg>
<div class="t" style="top:364.61px;font-family:'Liberation Mono', monospace;font-size:24px;line-height:24px;color:#161616;font-weight:400;left:235.00px;"><span style="color:#1f6c8c;">{</span> <span style="color:#b3b3b3;font-style:italic;">2 items</span></div>
<div class="b" style="left:246px;top:392px;width:2px;height:496px;background:#e6e6e8;"></div>
<svg class="b" style="left:261px;top:400px;" width="14" height="18" viewBox="0 0 14 18" fill="none"><polyline points="4,2.5 9.5,8.5 4,14.5" stroke="#0b2733" stroke-width="2.3" fill="none"/></svg>
<div class="t" style="top:398.61px;font-family:'Liberation Mono', monospace;font-size:24px;line-height:24px;color:#161616;font-weight:400;left:279.00px;"><span style="color:#161616;">&quot;ingredients&quot;</span><span style="color:#0e2a36;padding-right:4px">: </span><span style="color:#1f6c8c;">[</span><span style="color:#c2461c;">...</span><span style="color:#1f6c8c;">]</span> <span style="color:#b3b3b3;font-style:italic;">12 items</span></div>
<svg class="b" style="left:258px;top:437px;" width="16" height="14" viewBox="0 0 16 14" fill="none"><polyline points="2.5,4 8,9.5 13.5,4" stroke="#0b2733" stroke-width="2.3" fill="none"/></svg>
<div class="t" style="top:432.61px;font-family:'Liberation Mono', monospace;font-size:24px;line-height:24px;color:#161616;font-weight:400;left:279.00px;"><span style="color:#161616;">&quot;steps&quot;</span><span style="color:#0e2a36;padding-right:4px">: </span><span style="color:#1f6c8c;">[</span> <span style="color:#b3b3b3;font-style:italic;">5 items</span></div>
<div class="b" style="left:290px;top:459px;width:2px;height:395px;background:#e6e6e8;"></div>
<div class="t" style="top:472.11px;font-family:'Liberation Mono', monospace;font-size:24px;line-height:24px;color:#161616;font-weight:400;left:322.00px;"><span style="color:#2f87d8;">0</span><span style="color:#0e2a36;">:</span></div>
<div class="t" style="top:472.11px;font-family:'Liberation Mono', monospace;font-size:24px;line-height:24px;color:#a31616;font-weight:400;left:370.00px;">&quot;Cook the spaghetti according to package instructions until al dente.</div>
<div class="t" style="top:505.61px;font-family:'Liberation Mono', monospace;font-size:24px;line-height:24px;color:#a31616;font-weight:400;left:370.00px;">Drain and set aside.&quot;</div>
<div class="t" style="top:505.61px;font-family:'Liberation Mono', monospace;font-size:24px;line-height:24px;color:#0e2a36;font-weight:400;left:1369.00px;">,</div>
<div class="t" style="top:551.31px;font-family:'Liberation Mono', monospace;font-size:24px;line-height:24px;color:#161616;font-weight:400;left:322.00px;"><span style="color:#2f87d8;">1</span><span style="color:#0e2a36;">:</span></div>
<div class="t" style="top:551.31px;font-family:'Liberation Mono', monospace;font-size:24px;line-height:24px;color:#a31616;font-weight:400;left:370.00px;">&quot;In a large pan, heat the olive oil over medium heat. Add the onion a</div>
<div class="t" style="top:584.81px;font-family:'Liberation Mono', monospace;font-size:24px;line-height:24px;color:#a31616;font-weight:400;left:370.00px;">nd garlic, and sauté until the o...&quot;</div>
<div class="t" style="top:584.81px;font-family:'Liberation Mono', monospace;font-size:24px;line-height:24px;color:#0e2a36;font-weight:400;left:1369.00px;">,</div>
<div class="t" style="top:630.51px;font-family:'Liberation Mono', monospace;font-size:24px;line-height:24px;color:#161616;font-weight:400;left:322.00px;"><span style="color:#2f87d8;">2</span><span style="color:#0e2a36;">:</span></div>
<div class="t" style="top:630.51px;font-family:'Liberation Mono', monospace;font-size:24px;line-height:24px;color:#a31616;font-weight:400;left:370.00px;">&quot;Add the diced carrot and celery to the pan. Continue to cook for abo</div>
<div class="t" style="top:664.01px;font-family:'Liberation Mono', monospace;font-size:24px;line-height:24px;color:#a31616;font-weight:400;left:370.00px;">ut 5 minutes, until the vegetabl...&quot;</div>
<div class="t" style="top:664.01px;font-family:'Liberation Mono', monospace;font-size:24px;line-height:24px;color:#0e2a36;font-weight:400;left:1369.00px;">,</div>
<div class="t" style="top:709.71px;font-family:'Liberation Mono', monospace;font-size:24px;line-height:24px;color:#161616;font-weight:400;left:322.00px;"><span style="color:#2f87d8;">3</span><span style="color:#0e2a36;">:</span></div>
<div class="t" style="top:709.71px;font-family:'Liberation Mono', monospace;font-size:24px;line-height:24px;color:#a31616;font-weight:400;left:370.00px;">&quot;Stir in the diced tomatoes and tomato paste. Add the basil, oregano,</div>
<div class="t" style="top:743.21px;font-family:'Liberation Mono', monospace;font-size:24px;line-height:24px;color:#a31616;font-weight:400;left:370.00px;">salt, and pepper. Simmer the sa...&quot;</div>
<div class="t" style="top:743.21px;font-family:'Liberation Mono', monospace;font-size:24px;line-height:24px;color:#0e2a36;font-weight:400;left:1369.00px;">,</div>
<div class="t" style="top:788.91px;font-family:'Liberation Mono', monospace;font-size:24px;line-height:24px;color:#161616;font-weight:400;left:322.00px;"><span style="color:#2f87d8;">4</span><span style="color:#0e2a36;">:</span></div>
<div class="t" style="top:788.91px;font-family:'Liberation Mono', monospace;font-size:24px;line-height:24px;color:#a31616;font-weight:400;left:370.00px;">&quot;Serve the sauce over the cooked spaghetti. Sprinkle with grated Parm</div>
<div class="t" style="top:822.41px;font-family:'Liberation Mono', monospace;font-size:24px;line-height:24px;color:#a31616;font-weight:400;left:370.00px;">esan cheese if desired.&quot;</div>
<div class="t" style="top:822.41px;font-family:'Liberation Mono', monospace;font-size:24px;line-height:24px;color:#0e2a36;font-weight:400;left:1369.00px;">,</div>
<div class="t" style="top:860.61px;font-family:'Liberation Mono', monospace;font-size:24px;line-height:24px;color:#161616;font-weight:400;left:285.00px;"><span style="color:#1f6c8c;">]</span></div>
<div class="t" style="top:894.61px;font-family:'Liberation Mono', monospace;font-size:24px;line-height:24px;color:#161616;font-weight:400;left:242.00px;"><span style="color:#1f6c8c;">}</span></div>
<div class="t" style="top:1033.15px;left:-214.00px;width:600px;text-align:right;font-family:'Liberation Sans', sans-serif;font-size:26.4px;line-height:26.4px;color:#5b6169;font-weight:400;">input_tokens:</div>
<div class="t" style="top:1037.11px;left:-31.00px;width:600px;text-align:right;font-family:'Liberation Mono', monospace;font-size:24px;line-height:24px;color:#111;font-weight:400;">208</div>
<div class="t" style="top:1073.15px;left:-214.00px;width:600px;text-align:right;font-family:'Liberation Sans', sans-serif;font-size:26.4px;line-height:26.4px;color:#5b6169;font-weight:400;">output_tokens:</div>
<div class="t" style="top:1077.11px;left:-31.00px;width:600px;text-align:right;font-family:'Liberation Mono', monospace;font-size:24px;line-height:24px;color:#111;font-weight:400;">424</div>
<div class="t" style="top:1113.15px;left:-214.00px;width:600px;text-align:right;font-family:'Liberation Sans', sans-serif;font-size:26.4px;line-height:26.4px;color:#5b6169;font-weight:400;">requests:</div>
<div class="t" style="top:1117.11px;left:-31.00px;width:600px;text-align:right;font-family:'Liberation Mono', monospace;font-size:24px;line-height:24px;color:#111;font-weight:400;">1</div>
<svg class="b" style="left:208px;top:1174px;" width="48" height="48" viewBox="0 0 48 48" fill="none"><circle cx="24" cy="24" r="21" stroke="#e6392d" stroke-width="2.0"/><line x1="18.3" y1="18" x2="30" y2="29.7" stroke="#e6392d" stroke-width="2.6" stroke-linecap="round"/><line x1="30" y1="18" x2="18.3" y2="29.7" stroke="#e6392d" stroke-width="2.6" stroke-linecap="round"/></svg>
<svg class="b" style="left:260px;top:1174px;" width="48" height="48" viewBox="0 0 48 48" fill="none"><circle cx="24" cy="24" r="21" stroke="#10b27a" stroke-width="2.0"/><polyline points="16.5,25 21.5,30 32,19.5" stroke="#10b27a" stroke-width="2.6" fill="none" stroke-linecap="round" stroke-linejoin="miter"/></svg>
<svg class="b" style="left:312px;top:1174px;" width="48" height="48" viewBox="0 0 48 48" fill="none"><circle cx="24" cy="24" r="21" stroke="#10b27a" stroke-width="2.0"/><polyline points="16.5,25 21.5,30 32,19.5" stroke="#10b27a" stroke-width="2.6" fill="none" stroke-linecap="round" stroke-linejoin="miter"/></svg>
</div>
<svg class="b" style="left:0px;top:1812px;" width="24" height="24" viewBox="0 0 24 24" fill="none"><path d="M0 0 V24 H24 A24 24 0 0 1 0 0 Z" fill="#141414"/></svg>
<svg class="b" style="left:3432px;top:1812px;" width="24" height="24" viewBox="0 0 24 24" fill="none"><path d="M24 0 V24 H0 A24 24 0 0 0 24 0 Z" fill="#141414"/></svg>
<script>(function(){var w=window.innerWidth;if(w&&Math.abs(w-3456)>4){document.documentElement.style.zoom=w/3456;}})();</script>
</body></html>
